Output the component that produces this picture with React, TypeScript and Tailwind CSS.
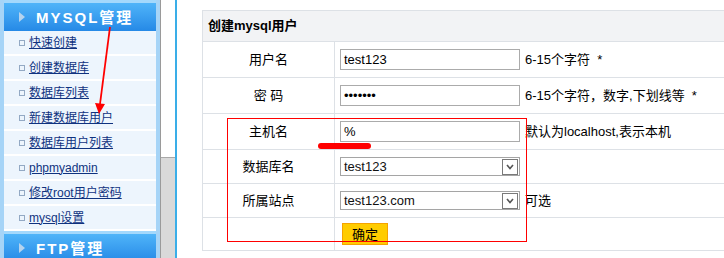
const menuItems = [
  "快速创建",
  "创建数据库",
  "数据库列表",
  "新建数据库用户",
  "数据库用户列表",
  "phpmyadmin",
  "修改root用户密码",
  "mysql设置",
];

const font = "font-['Liberation_Sans','Noto_Sans_CJK_SC',sans-serif]";

function SideHeader({ title }: { title: string }) {
  return (
    <div className="h-[31px] shrink-0 border-t-[3px] border-[#a3d8fc] bg-gradient-to-b from-[#4fb4f9] to-[#2589e6] flex items-center pl-[15px]">
      <span className="w-0 h-0 border-y-[5px] border-y-transparent border-l-[6px] border-l-[#b5d3ee]" />
      <span className="ml-[11px] text-white font-bold text-[15px] tracking-[2px] leading-none">{title}</span>
    </div>
  );
}

function Chevron() {
  return (
    <span className="w-[16px] h-[16px] border border-[#7a7a7a] bg-white flex items-center justify-center">
      <svg width="8" height="6" viewBox="0 0 8 6">
        <path d="M1 1 L4 4.5 L7 1" fill="none" stroke="#555" strokeWidth="1.6" />
      </svg>
    </span>
  );
}

function TextBox({ value }: { value: string }) {
  return (
    <div className="w-[180px] h-[21px] border border-[#ababab] bg-white flex items-center pl-[3px] text-[13px] text-black">
      {value}
    </div>
  );
}

function SelectBox({ value }: { value: string }) {
  return (
    <div className="w-[180px] h-[19px] border border-[#a5a5a5] bg-white flex items-center justify-between pl-[3px] pr-[1px] text-[13px] text-[#111]">
      <span>{value}</span>
      <Chevron />
    </div>
  );
}

export default function App() {
  return (
    <div className={`relative w-[724px] h-[258px] overflow-hidden bg-white flex ${font}`}>
      {/* left menu */}
      <div className="w-[160px] shrink-0 border-x-4 border-[#a6d4f7] bg-[#edf5fd] flex flex-col">
        <SideHeader title="MYSQL管理" />
        {menuItems.map((item) => (
          <div key={item} className="h-[25px] shrink-0 border-b-2 border-white flex items-center pl-[15px]">
            <span className="w-[6px] h-[6px] border border-[#93a9c4] mr-[4px]" />
            <a className="text-[12px] text-[#0f327f] underline underline-offset-[1px] leading-none">{item}</a>
          </div>
        ))}
        <SideHeader title="FTP管理" />
      </div>

      {/* splitter */}
      <div className="w-[15px] shrink-0 border-l border-[#9a9a9a] flex flex-col">
        <div className="h-[157px] bg-white" />
        <div className="flex-1 bg-[#d9d9d9] border-t border-[#a8a8a8]" />
      </div>

      {/* main */}
      <div className="flex-1 border-l-2 border-[#3aaee8] pl-[25px] pt-[10px]">
        <table className="w-[540px] border-collapse text-[13px] text-black">
          <tbody>
            <tr className="h-[31px] bg-[#f2f3f5]">
              <td colSpan={2} className="border border-[#dde1e6] pl-[5px] font-bold text-[13px]">
                创建mysql用户
              </td>
            </tr>
            <tr className="h-[36px]">
              <td className="w-[132px] border border-[#dde1e6] text-center">用户名</td>
              <td className="border border-[#dde1e6] pl-[5px]">
                <div className="flex items-center gap-[5px]">
                  <TextBox value="test123" />
                  <span>6-15个字符&nbsp;&nbsp;*</span>
                </div>
              </td>
            </tr>
            <tr className="h-[36px]">
              <td className="border border-[#dde1e6] text-center">密&nbsp;码</td>
              <td className="border border-[#dde1e6] pl-[5px]">
                <div className="flex items-center gap-[5px]">
                  <TextBox value="•••••••" />
                  <span>6-15个字符，数字,下划线等&nbsp;&nbsp;*</span>
                </div>
              </td>
            </tr>
            <tr className="h-[36px]">
              <td className="border border-[#dde1e6] text-center">主机名</td>
              <td className="border border-[#dde1e6] pl-[5px]">
                <div className="flex items-center gap-[5px]">
                  <TextBox value="%" />
                  <span>默认为localhost,表示本机</span>
                </div>
              </td>
            </tr>
            <tr className="h-[34px]">
              <td className="border border-[#dde1e6] text-center">数据库名</td>
              <td className="border border-[#dde1e6] pl-[5px]">
                <SelectBox value="test123" />
              </td>
            </tr>
            <tr className="h-[34px]">
              <td className="border border-[#dde1e6] text-center">所属站点</td>
              <td className="border border-[#dde1e6] pl-[5px]">
                <div className="flex items-center gap-[5px]">
                  <SelectBox value="test123.com" />
                  <span>可选</span>
                </div>
              </td>
            </tr>
            <tr className="h-[33px]">
              <td className="border border-[#dde1e6]" />
              <td className="border border-[#dde1e6] pl-[7px]">
                <button className="w-[46px] h-[22px] bg-[#ffcc00] border border-[#f5a300] text-[13px] text-black leading-none">
                  确定
                </button>
              </td>
            </tr>
          </tbody>
        </table>
      </div>

      {/* annotations */}
      <div className="absolute left-[227px] top-[118px] w-[300px] h-[124px] border-[1.5px] border-[#ff0000] pointer-events-none" />
      <div className="absolute left-[318px] top-[143px] w-[53px] h-[6px] rounded-full bg-[#ff0000] pointer-events-none" />
      <svg className="absolute left-0 top-0 pointer-events-none" width="724" height="258">
        <line x1="110" y1="27" x2="100" y2="104" stroke="#ff0000" strokeWidth="1.8" />
        <polygon points="95,103 105,104 99,114" fill="#ff0000" />
      </svg>
    </div>
  );
}
